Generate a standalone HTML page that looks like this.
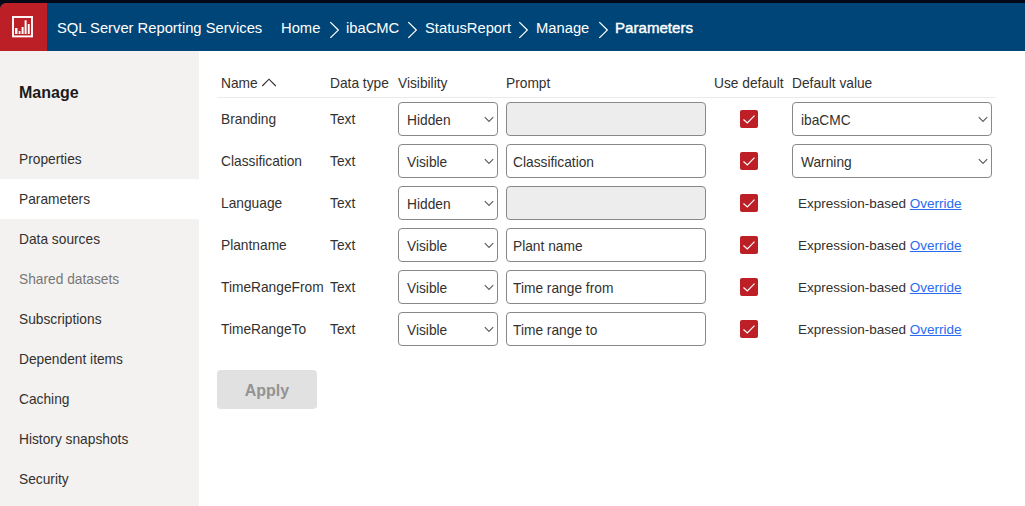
<!DOCTYPE html>
<html>
<head>
<meta charset="utf-8">
<style>
*{box-sizing:border-box;margin:0;padding:0}
html,body{width:1025px;height:506px;overflow:hidden;background:#fff;font-family:"Liberation Sans",sans-serif;color:#323130}
.abs{position:absolute;white-space:nowrap}
#topband{position:absolute;left:0;top:0;width:1025px;height:8px;background:#040917}
#header{position:absolute;left:0;top:3px;width:1025px;height:48px;background:#004578;border-top-left-radius:6px;overflow:hidden}
#logo{position:absolute;left:0;top:0;width:47px;height:48px;background:#bc2026}
.hd{position:absolute;top:1px;height:48px;line-height:48px;color:#fff;font-size:14.75px;white-space:nowrap}
.chev{position:absolute;top:16px}
#sidebar{position:absolute;left:0;top:51px;width:199px;height:455px;background:#f3f2f1}
.nav{position:absolute;left:0;width:199px;height:40px;line-height:42px;padding-left:19px;font-size:13.75px;color:#323130;white-space:nowrap}
.nav.sel{background:#fff}
.nav.dis{color:#797775}
.t{position:absolute;font-size:13.75px;line-height:20px;white-space:nowrap;color:#323130}
.sel-box{position:absolute;height:34px;border:1px solid #8a8886;border-radius:4px;background:#fff}
.sel-box span{position:absolute;left:8px;top:8px;font-size:13.75px;line-height:20px}
.sel-box svg{position:absolute;right:2px;top:13px}
.inp{position:absolute;width:200px;height:34px;border:1px solid #8a8886;border-radius:4px;background:#fff}
.inp.dis{background:#ededed}
.inp span{position:absolute;left:6px;top:8px;font-size:13.75px;line-height:20px}
.cb{position:absolute;left:740px;width:18px;height:18px;background:#bc2026;border-radius:2px}
.cb svg{position:absolute;left:0;top:0}
.link{color:#2a6cf0;text-decoration:underline}
</style>
</head>
<body>
<div id="topband"></div>
<div id="header">
  <div id="logo">
    <svg width="47" height="48" viewBox="0 0 47 48" style="position:absolute;left:0;top:0">
      <rect x="13" y="14" width="19" height="19.4" fill="none" stroke="#fff" stroke-width="1.9"/>
      <rect x="15" y="25" width="2.5" height="6" fill="#fff"/>
      <rect x="18.7" y="28" width="1.8" height="3" fill="#fff"/>
      <rect x="21.6" y="24" width="2" height="7" fill="#fff"/>
      <rect x="24.6" y="17.3" width="2" height="13.7" fill="#fff"/>
      <rect x="27.8" y="21" width="1.9" height="10" fill="#fff"/>
    </svg>
  </div>
  <div class="hd" style="left:57px">SQL Server Reporting Services</div>
  <div class="hd" style="left:281px">Home</div>
  <div class="hd" style="left:346px">ibaCMC</div>
  <div class="hd" style="left:425px">StatusReport</div>
  <div class="hd" style="left:536px">Manage</div>
  <div class="hd" style="left:615px;font-size:15.1px;-webkit-text-stroke:0.4px #fff">Parameters</div>
  <svg class="chev" style="left:329px" width="12" height="21" viewBox="0 0 12 21"><path d="M1.3 3.1 L9.3 11.1 L1.3 18.9" fill="none" stroke="#fff" stroke-width="1.3"/></svg>
  <svg class="chev" style="left:407px" width="12" height="21" viewBox="0 0 12 21"><path d="M1.3 3.1 L9.3 11.1 L1.3 18.9" fill="none" stroke="#fff" stroke-width="1.3"/></svg>
  <svg class="chev" style="left:518px" width="12" height="21" viewBox="0 0 12 21"><path d="M1.3 3.1 L9.3 11.1 L1.3 18.9" fill="none" stroke="#fff" stroke-width="1.3"/></svg>
  <svg class="chev" style="left:598px" width="12" height="21" viewBox="0 0 12 21"><path d="M1.3 3.1 L9.3 11.1 L1.3 18.9" fill="none" stroke="#fff" stroke-width="1.3"/></svg>
</div>

<div id="sidebar">
  <div class="abs" style="left:19px;top:31px;font-size:16px;font-weight:700;color:#1b1a19;line-height:22px">Manage</div>
  <div class="nav" style="top:88px">Properties</div>
  <div class="nav sel" style="top:128px">Parameters</div>
  <div class="nav" style="top:168px">Data sources</div>
  <div class="nav dis" style="top:208px">Shared datasets</div>
  <div class="nav" style="top:248px">Subscriptions</div>
  <div class="nav" style="top:288px">Dependent items</div>
  <div class="nav" style="top:328px">Caching</div>
  <div class="nav" style="top:368px">History snapshots</div>
  <div class="nav" style="top:408px">Security</div>
</div>

<!-- table header -->
<div class="t" style="left:221px;top:74px">Name</div>
<svg class="abs" style="left:260px;top:77px" width="18" height="11" viewBox="0 0 18 11"><path d="M2.2 9 L9 2.2 L15.8 9" fill="none" stroke="#323130" stroke-width="1.15"/></svg>
<div class="t" style="left:330px;top:74px">Data type</div>
<div class="t" style="left:398px;top:74px">Visibility</div>
<div class="t" style="left:506px;top:74px">Prompt</div>
<div class="t" style="left:714px;top:74px">Use default</div>
<div class="t" style="left:792px;top:74px">Default value</div>
<div class="abs" style="left:217px;top:97px;width:779px;height:1px;background:#edebe9"></div>

<!--ROWS-->
<div class="t" style="left:221px;top:110px">Branding</div>
<div class="t" style="left:330px;top:110px">Text</div>
<div class="sel-box" style="left:398px;top:102px;width:100px"><span>Hidden</span><svg width="11" height="7" viewBox="0 0 11 7"><path d="M0.8 1.1 L5 5.5 L9.2 1.1" fill="none" stroke="#605e5c" stroke-width="1.15"/></svg></div>
<div class="inp dis" style="left:506px;top:102px"></div>
<div class="cb" style="top:110px"><svg width="18" height="18" viewBox="0 0 18 18"><path d="M3.5 9.5 L7.3 13 L14.5 5.6" fill="none" stroke="#fff" stroke-width="1.15"/></svg></div>
<div class="sel-box" style="left:792px;top:102px;width:200px"><span>ibaCMC</span><svg width="11" height="7" viewBox="0 0 11 7"><path d="M0.8 1.1 L5 5.5 L9.2 1.1" fill="none" stroke="#605e5c" stroke-width="1.15"/></svg></div>
<div class="t" style="left:221px;top:152px">Classification</div>
<div class="t" style="left:330px;top:152px">Text</div>
<div class="sel-box" style="left:398px;top:144px;width:100px"><span>Visible</span><svg width="11" height="7" viewBox="0 0 11 7"><path d="M0.8 1.1 L5 5.5 L9.2 1.1" fill="none" stroke="#605e5c" stroke-width="1.15"/></svg></div>
<div class="inp" style="left:506px;top:144px"><span>Classification</span></div>
<div class="cb" style="top:152px"><svg width="18" height="18" viewBox="0 0 18 18"><path d="M3.5 9.5 L7.3 13 L14.5 5.6" fill="none" stroke="#fff" stroke-width="1.15"/></svg></div>
<div class="sel-box" style="left:792px;top:144px;width:200px"><span>Warning</span><svg width="11" height="7" viewBox="0 0 11 7"><path d="M0.8 1.1 L5 5.5 L9.2 1.1" fill="none" stroke="#605e5c" stroke-width="1.15"/></svg></div>
<div class="t" style="left:221px;top:194px">Language</div>
<div class="t" style="left:330px;top:194px">Text</div>
<div class="sel-box" style="left:398px;top:186px;width:100px"><span>Hidden</span><svg width="11" height="7" viewBox="0 0 11 7"><path d="M0.8 1.1 L5 5.5 L9.2 1.1" fill="none" stroke="#605e5c" stroke-width="1.15"/></svg></div>
<div class="inp dis" style="left:506px;top:186px"></div>
<div class="cb" style="top:194px"><svg width="18" height="18" viewBox="0 0 18 18"><path d="M3.5 9.5 L7.3 13 L14.5 5.6" fill="none" stroke="#fff" stroke-width="1.15"/></svg></div>
<div class="t" style="left:798px;top:194px;font-size:13.5px">Expression-based <span class="link">Override</span></div>
<div class="t" style="left:221px;top:236px">Plantname</div>
<div class="t" style="left:330px;top:236px">Text</div>
<div class="sel-box" style="left:398px;top:228px;width:100px"><span>Visible</span><svg width="11" height="7" viewBox="0 0 11 7"><path d="M0.8 1.1 L5 5.5 L9.2 1.1" fill="none" stroke="#605e5c" stroke-width="1.15"/></svg></div>
<div class="inp" style="left:506px;top:228px"><span>Plant name</span></div>
<div class="cb" style="top:236px"><svg width="18" height="18" viewBox="0 0 18 18"><path d="M3.5 9.5 L7.3 13 L14.5 5.6" fill="none" stroke="#fff" stroke-width="1.15"/></svg></div>
<div class="t" style="left:798px;top:236px;font-size:13.5px">Expression-based <span class="link">Override</span></div>
<div class="t" style="left:221px;top:278px">TimeRangeFrom</div>
<div class="t" style="left:330px;top:278px">Text</div>
<div class="sel-box" style="left:398px;top:270px;width:100px"><span>Visible</span><svg width="11" height="7" viewBox="0 0 11 7"><path d="M0.8 1.1 L5 5.5 L9.2 1.1" fill="none" stroke="#605e5c" stroke-width="1.15"/></svg></div>
<div class="inp" style="left:506px;top:270px"><span>Time range from</span></div>
<div class="cb" style="top:278px"><svg width="18" height="18" viewBox="0 0 18 18"><path d="M3.5 9.5 L7.3 13 L14.5 5.6" fill="none" stroke="#fff" stroke-width="1.15"/></svg></div>
<div class="t" style="left:798px;top:278px;font-size:13.5px">Expression-based <span class="link">Override</span></div>
<div class="t" style="left:221px;top:320px">TimeRangeTo</div>
<div class="t" style="left:330px;top:320px">Text</div>
<div class="sel-box" style="left:398px;top:312px;width:100px"><span>Visible</span><svg width="11" height="7" viewBox="0 0 11 7"><path d="M0.8 1.1 L5 5.5 L9.2 1.1" fill="none" stroke="#605e5c" stroke-width="1.15"/></svg></div>
<div class="inp" style="left:506px;top:312px"><span>Time range to</span></div>
<div class="cb" style="top:320px"><svg width="18" height="18" viewBox="0 0 18 18"><path d="M3.5 9.5 L7.3 13 L14.5 5.6" fill="none" stroke="#fff" stroke-width="1.15"/></svg></div>
<div class="t" style="left:798px;top:320px;font-size:13.5px">Expression-based <span class="link">Override</span></div>
<!--/ROWS-->

<div class="abs" style="left:217px;top:370px;width:100px;height:39px;background:#e1e1e1;border-radius:4px;font-size:16px;font-weight:700;color:#939393;text-align:center;line-height:41px">Apply</div>
</body>
</html>
